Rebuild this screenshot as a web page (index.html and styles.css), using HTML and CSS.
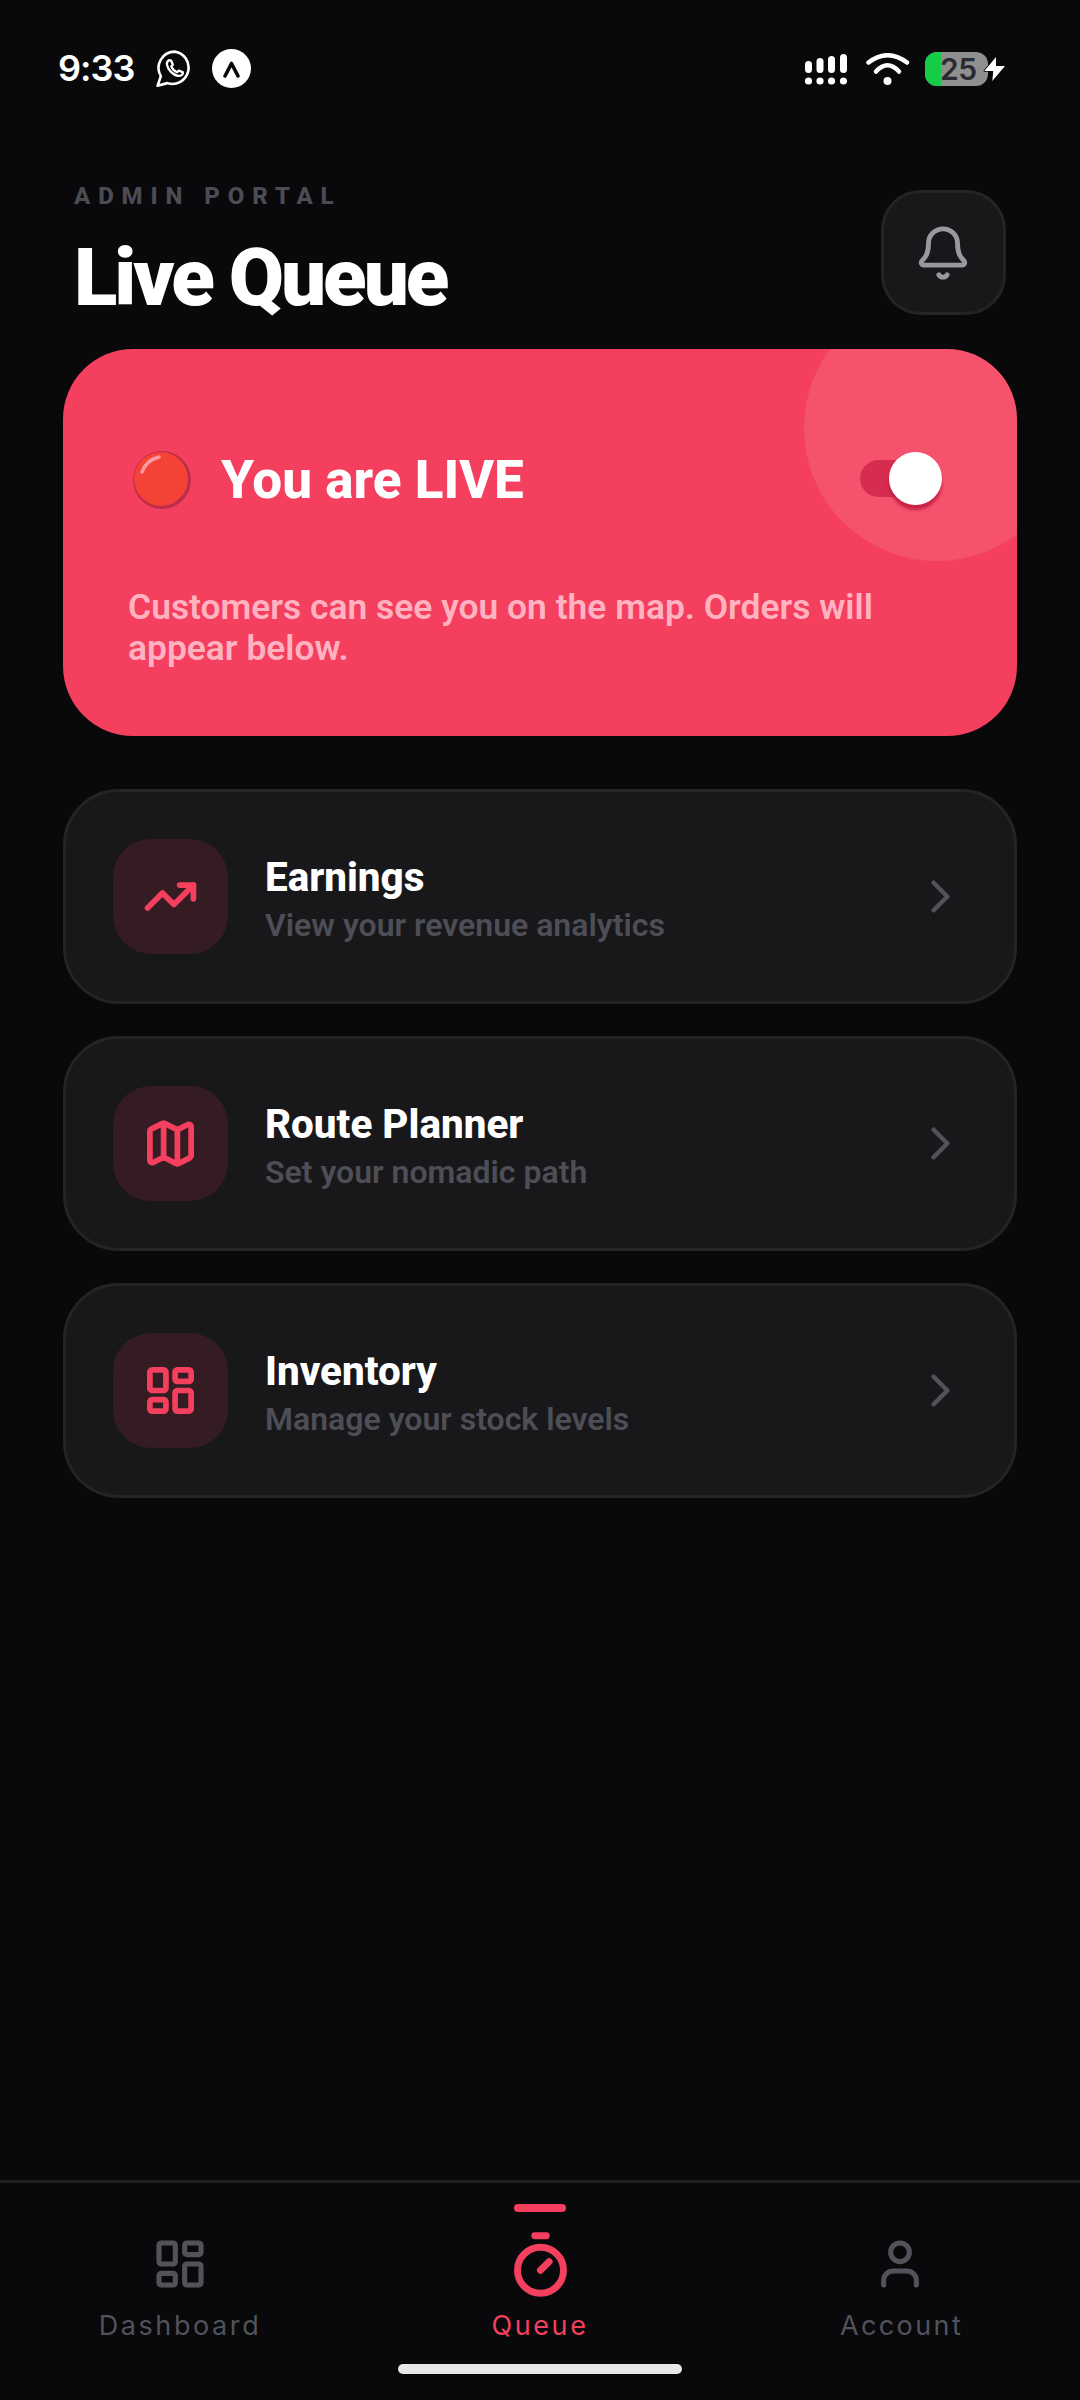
FILE: index.html
```html
<!DOCTYPE html>
<html lang="en">

<head>
  <meta charset="UTF-8">
  <meta name="viewport" content="width=device-width, initial-scale=1.0">
  <title>Live Queue</title>
  <link rel="stylesheet" href="styles.css">
</head>

<body>
  <div class="page">
    <!-- status bar -->
    <div class="status-bar">
      <div class="status-left">
        <span class="status-time">9:33</span>
        <svg class="status-whatsapp" viewBox="0 0 24 24" fill="none" stroke="#fff" stroke-linejoin="round" stroke-linecap="round">
          <path stroke-width="1.6" d="M12.2 1.6a10 10 0 0 0-8.6 15.1L1.6 22.6l6-1.6A10 10 0 1 0 12.2 1.6z" />
          <path stroke-width="1.4" d="M8.5 6.9c-.9.6-1.4 1.7-1.1 3 .6 3 3.6 6 6.6 6.6 1.3.2 2.4-.2 3-1.1l.2-1-2.5-1.2-1.1 1.1c-1.5-.6-3-2.1-3.6-3.6l1-1-1.1-2.6z" />
        </svg>
        <svg class="status-expo" viewBox="0 0 39 39">
          <circle cx="19.5" cy="19.5" r="19.5" fill="#fff" />
          <path d="M13 27 19.5 14.5 26 27" fill="none" stroke="#09090b" stroke-width="3.6" stroke-linecap="round" stroke-linejoin="round" />
        </svg>
      </div>
      <div class="status-right">
        <svg class="status-signal" viewBox="0 0 42 32" fill="#fff">
          <rect x="0" y="8" width="7" height="12" rx="3.5" />
          <rect x="11.5" y="5" width="7" height="15" rx="3.5" />
          <rect x="23" y="3" width="7" height="17" rx="3.5" />
          <rect x="35" y="1" width="7" height="19" rx="3.5" />
          <circle cx="3.5" cy="28" r="3.6" />
          <circle cx="15" cy="28" r="3.6" />
          <circle cx="26.5" cy="28" r="3.6" />
          <circle cx="38.5" cy="28" r="3.6" />
        </svg>
        <svg class="status-wifi" viewBox="0 0 44 32" fill="none" stroke="#fff" stroke-width="4.5" stroke-linecap="round">
          <path d="M2.5 9.5Q21.5 -5 41 9.5" />
          <path d="M10 18.5Q21.5 6 33 18.5" />
          <circle cx="21.5" cy="28" r="4" fill="#fff" stroke="none" />
        </svg>
        <div class="battery">
          <div class="battery-fill"></div>
          <span class="battery-num">25</span>
        </div>
        <svg class="status-bolt" viewBox="0 0 22 24">
          <path d="M13 0 1.3 14h9l-1 10L22 9h-9z" fill="#fff" stroke="#09090b" stroke-width="1.5" paint-order="stroke" stroke-linejoin="round" />
        </svg>
      </div>
    </div>

    <!-- header -->
    <div class="header">
      <div>
        <div class="header-small">ADMIN PORTAL</div>
        <div class="header-title">Live Queue</div>
      </div>
      <div class="bell-btn">
        <svg class="bell-icon" viewBox="0 0 24 24" fill="none" stroke="currentColor" stroke-width="2" stroke-linecap="round" stroke-linejoin="round">
          <path d="M10.268 21a2 2 0 0 0 3.464 0" />
          <path d="M3.262 15.326A1 1 0 0 0 4 17h16a1 1 0 0 0 .74-1.673C19.41 13.956 18 12.499 18 8A6 6 0 0 0 6 8c0 4.499-1.411 5.956-2.738 7.326" />
        </svg>
      </div>
    </div>

    <!-- live card -->
    <div class="live-card">
      <div class="live-circle"></div>
      <div class="live-row">
        <svg class="live-dot" viewBox="0 0 58 58">
          <circle cx="29" cy="29" r="29" fill="#bd2d4a" />
          <circle cx="28" cy="28" r="27" fill="#f44336" />
          <path d="M9 21C12 13 18 8 26 6" fill="none" stroke="#fb9aa6" stroke-width="3.5" stroke-linecap="round" />
        </svg>
        <div class="live-title">You are LIVE</div>
        <div class="switch">
          <div class="switch-track"></div>
          <div class="switch-thumb"></div>
        </div>
      </div>
      <div class="live-text">Customers can see you on the map. Orders will appear below.</div>
    </div>

    <!-- menu -->
    <div class="menu">
      <div class="menu-card">
        <div class="menu-icon">
          <svg viewBox="0 0 24 24" fill="none" stroke="currentColor" stroke-width="2.5" stroke-linecap="round" stroke-linejoin="round">
            <polyline points="22 7 13.5 15.5 8.5 10.5 2 17" />
            <polyline points="16 7 22 7 22 13" />
          </svg>
        </div>
        <div class="menu-text">
          <div class="menu-title">Earnings</div>
          <div class="menu-sub">View your revenue analytics</div>
        </div>
        <svg class="menu-arrow" viewBox="0 0 24 24" fill="none" stroke="currentColor" stroke-width="2" stroke-linecap="round" stroke-linejoin="round">
          <path d="m9 18 6-6-6-6" />
        </svg>
      </div>
      <div class="menu-card">
        <div class="menu-icon">
          <svg viewBox="0 0 24 24" fill="none" stroke="currentColor" stroke-width="2.5" stroke-linecap="round" stroke-linejoin="round">
            <path d="M14.106 5.553a2 2 0 0 0 1.788 0l3.659-1.83A1 1 0 0 1 21 4.619v12.764a1 1 0 0 1-.553.894l-4.553 2.277a2 2 0 0 1-1.788 0l-4.212-2.106a2 2 0 0 0-1.788 0l-3.659 1.83A1 1 0 0 1 3 19.381V6.618a1 1 0 0 1 .553-.894l4.553-2.277a2 2 0 0 1 1.788 0z" />
            <path d="M15 5.764v15" />
            <path d="M9 3.236v15" />
          </svg>
        </div>
        <div class="menu-text">
          <div class="menu-title">Route Planner</div>
          <div class="menu-sub">Set your nomadic path</div>
        </div>
        <svg class="menu-arrow" viewBox="0 0 24 24" fill="none" stroke="currentColor" stroke-width="2" stroke-linecap="round" stroke-linejoin="round">
          <path d="m9 18 6-6-6-6" />
        </svg>
      </div>
      <div class="menu-card">
        <div class="menu-icon">
          <svg viewBox="0 0 24 24" fill="none" stroke="currentColor" stroke-width="2.5" stroke-linecap="round" stroke-linejoin="round">
            <rect width="7" height="9" x="3" y="3" rx="1" />
            <rect width="7" height="5" x="14" y="3" rx="1" />
            <rect width="7" height="9" x="14" y="12" rx="1" />
            <rect width="7" height="5" x="3" y="16" rx="1" />
          </svg>
        </div>
        <div class="menu-text">
          <div class="menu-title">Inventory</div>
          <div class="menu-sub">Manage your stock levels</div>
        </div>
        <svg class="menu-arrow" viewBox="0 0 24 24" fill="none" stroke="currentColor" stroke-width="2" stroke-linecap="round" stroke-linejoin="round">
          <path d="m9 18 6-6-6-6" />
        </svg>
      </div>
    </div>

    <!-- bottom tabs -->
    <div class="tabbar">
      <div class="tabs">
        <div class="tab">
          <div class="tab-icon">
            <svg class="icon-small" viewBox="0 0 24 24" fill="none" stroke="currentColor" stroke-width="2.2" stroke-linecap="round" stroke-linejoin="round">
              <rect width="7" height="9" x="3" y="3" rx="1" />
              <rect width="7" height="5" x="14" y="3" rx="1" />
              <rect width="7" height="9" x="14" y="12" rx="1" />
              <rect width="7" height="5" x="3" y="16" rx="1" />
            </svg>
          </div>
          <div class="tab-label">Dashboard</div>
        </div>
        <div class="tab tab--active">
          <div class="tab-line"></div>
          <div class="tab-icon">
            <svg class="icon-big" viewBox="0 0 24 24" fill="none" stroke="currentColor" stroke-width="2.4" stroke-linecap="round" stroke-linejoin="round">
              <line x1="10" x2="14" y1="2" y2="2" />
              <line x1="12" x2="15" y1="14" y2="11" />
              <circle cx="12" cy="14" r="8" />
            </svg>
          </div>
          <div class="tab-label">Queue</div>
        </div>
        <div class="tab">
          <div class="tab-icon">
            <svg class="icon-small" viewBox="0 0 24 24" fill="none" stroke="currentColor" stroke-width="2.2" stroke-linecap="round" stroke-linejoin="round">
              <path d="M19 21v-2a4 4 0 0 0-4-4H9a4 4 0 0 0-4 4v2" />
              <circle cx="12" cy="7" r="4" />
            </svg>
          </div>
          <div class="tab-label tab-label--account">Account</div>
        </div>
      </div>
      <div class="home-bar"></div>
    </div>
  </div>
</body>

</html>
```

FILE: styles.css
```css
* {
  box-sizing: border-box;
}

body {
  margin: 0;
  background-color: #09090b;
  color: #fff;
  font-family: Roboto, "Liberation Sans", sans-serif;
}

.page {
  width: 1080px;
  height: 2400px;
  display: flex;
  flex-direction: column;
  overflow: hidden;
}

/* status bar */
.status-bar {
  display: flex;
  justify-content: space-between;
  align-items: center;
  height: 39px;
  margin-top: 49px;
  padding: 0 75px 0 58px;
}

.status-left,
.status-right {
  display: flex;
  align-items: center;
}

.status-time {
  font-family: Inter, sans-serif;
  font-size: 36px;
  font-weight: 600;
  letter-spacing: -1px;
  line-height: 39px;
}

.status-whatsapp {
  width: 39px;
  height: 39px;
  margin-left: 21px;
}

.status-expo {
  width: 39px;
  height: 39px;
  margin-left: 18px;
}

.status-signal {
  width: 42px;
  height: 32px;
}

.status-wifi {
  width: 44px;
  height: 32px;
  margin-left: 19px;
}

.battery {
  position: relative;
  width: 63px;
  height: 34px;
  margin-left: 15px;
  border-radius: 12px;
  background-color: #8f8f8f;
  display: flex;
  align-items: center;
  padding-left: 15px;
}

.battery-fill {
  position: absolute;
  left: 0;
  top: 0;
  bottom: 0;
  width: 16px;
  border-radius: 12px 0 0 12px;
  background-color: #16cc46;
}

.battery-num {
  position: relative;
  font-family: Inter, sans-serif;
  font-size: 30px;
  font-weight: 600;
  line-height: 34px;
  color: #2a2a30;
  letter-spacing: -0.5px;
}

.status-bolt {
  position: relative;
  width: 22px;
  height: 24px;
  margin-left: -5px;
  overflow: visible;
}

/* header */
.header {
  display: flex;
  justify-content: space-between;
  align-items: flex-start;
  margin-top: 90px;
  padding: 0 74px;
}

.header-small {
  margin-top: 4px;
  font-size: 24px;
  font-weight: 800;
  line-height: 28px;
  letter-spacing: 7.9px;
  color: #4c4c54;
}

.header-title {
  margin-top: 24px;
  font-size: 80px;
  font-weight: 900;
  line-height: 88px;
  letter-spacing: -3px;
}

.bell-btn {
  display: flex;
  align-items: center;
  justify-content: center;
  width: 125px;
  height: 125px;
  margin-top: 12px;
  border: 3px solid #242427;
  border-radius: 40px;
  background-color: #18181b;
  color: #98989f;
}

.bell-icon {
  width: 58px;
  height: 58px;
  margin-right: 2px;
}

/* live card */
.live-card {
  position: relative;
  margin: 27px 63px 0;
  padding: 102px 75px 0 65px;
  height: 387px;
  border-radius: 70px;
  background-color: #f43f5e;
  overflow: hidden;
}

.live-circle {
  position: absolute;
  top: -54px;
  right: -53px;
  width: 266px;
  height: 266px;
  border-radius: 50%;
  background-color: rgba(255, 255, 255, .1);
}

.live-row {
  position: relative;
  display: flex;
  align-items: flex-start;
  height: 58px;
}

.live-dot {
  width: 58px;
  height: 58px;
  margin-left: 5px;
}

.live-title {
  flex: 1;
  margin-left: 30px;
  font-size: 53px;
  font-weight: 800;
  line-height: 58px;
}

.switch {
  position: relative;
  width: 82px;
  height: 53px;
  margin-top: 1px;
}

.switch-track {
  position: absolute;
  left: 0;
  right: 2px;
  top: 8px;
  height: 37px;
  border-radius: 19px;
  background-color: #d62c50;
}

.switch-thumb {
  position: absolute;
  right: 0;
  top: 0;
  width: 53px;
  height: 53px;
  border-radius: 50%;
  background-color: #fff;
  box-shadow: 0 5px 3px rgba(190, 24, 60, .8);
}

.live-text {
  position: relative;
  margin-top: 78px;
  font-size: 35.4px;
  font-weight: 600;
  line-height: 41px;
  color: #ffb3c1;
}

/* menu */
.menu {
  display: flex;
  flex-direction: column;
  gap: 32px;
  margin: 53px 63px 0;
}

.menu-card {
  display: flex;
  align-items: center;
  height: 215px;
  padding: 0 46px 0 47px;
  border: 3px solid #242427;
  border-radius: 56px;
  background-color: #18181b;
}

.menu-icon {
  display: flex;
  align-items: center;
  justify-content: center;
  flex-shrink: 0;
  width: 115px;
  height: 115px;
  border-radius: 38px;
  background-color: #351c23;
  color: #f43f5e;
}

.menu-icon svg {
  width: 55px;
  height: 55px;
}

.menu-text {
  flex: 1;
  margin-left: 37px;
  padding-top: 6px;
}

.menu-title {
  font-size: 40.4px;
  font-weight: 800;
  line-height: 48px;
}

.menu-sub {
  margin-top: 3px;
  font-size: 32px;
  font-weight: 600;
  line-height: 40px;
  color: #4e4e56;
}

.menu-arrow {
  width: 55px;
  height: 55px;
  color: #52525b;
}

/* tabs */
.tabbar {
  margin-top: auto;
  height: 220px;
  border-top: 3px solid #1f1f22;
}

.tabs {
  display: flex;
  padding-top: 46px;
}

.tab {
  position: relative;
  flex: 1;
  display: flex;
  flex-direction: column;
  align-items: center;
  color: #52525b;
}

.tab--active {
  color: #f43f5e;
}

.tab-line {
  position: absolute;
  top: -25px;
  width: 52px;
  height: 8px;
  border-radius: 4px;
  background-color: #f43f5e;
}

.tab-icon {
  display: flex;
  align-items: center;
  justify-content: center;
  height: 70px;
}

.icon-small {
  width: 56px;
  height: 56px;
}

.icon-big {
  width: 69px;
  height: 69px;
}

.tab-label {
  margin-top: 9px;
  font-family: Inter, sans-serif;
  font-size: 27px;
  font-weight: 400;
  line-height: 36px;
  letter-spacing: 2.6px;
}

.tab-label--account {
  margin-left: 3px;
  letter-spacing: 2.4px;
}

.home-bar {
  width: 284px;
  height: 10px;
  margin: 20px auto 0;
  border-radius: 5px;
  background-color: #e8e8e8;
}
```
